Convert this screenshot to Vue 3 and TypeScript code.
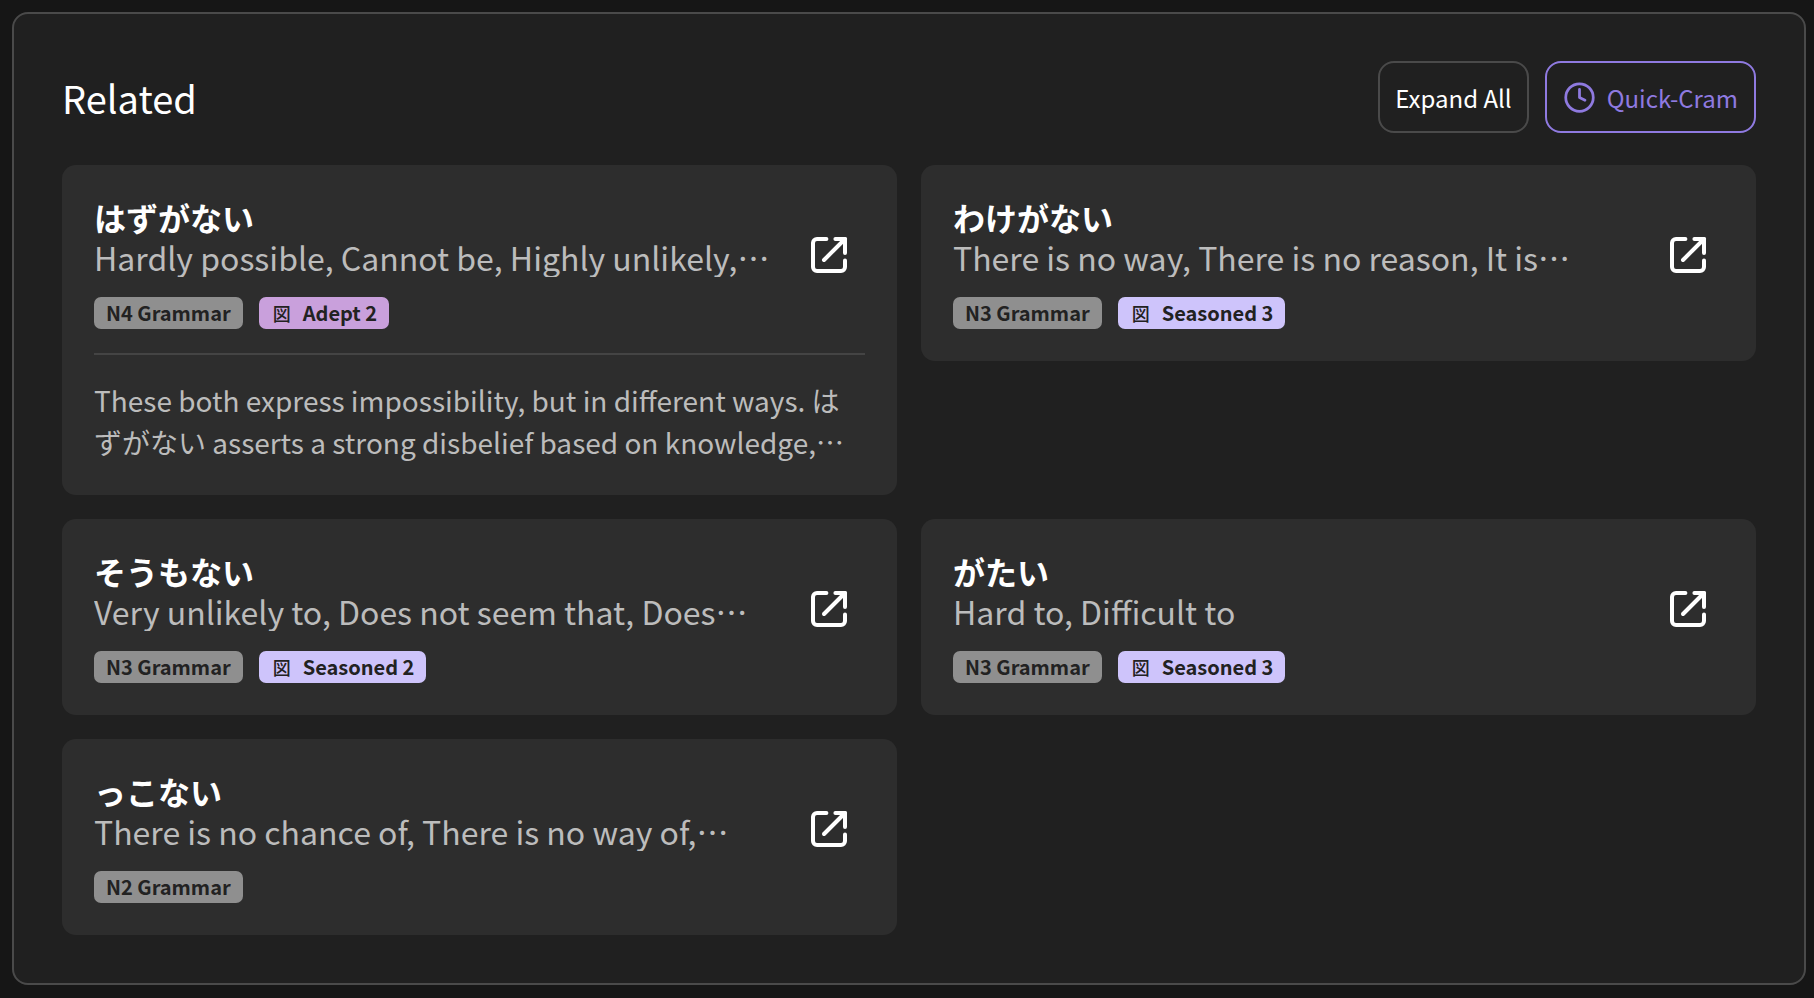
<template>
  <div class="page">
    <section class="panel">
      <header class="panel-head">
        <h2 class="panel-title">Related</h2>
        <div class="panel-actions">
          <button type="button" class="btn btn-expand">Expand All</button>
          <button type="button" class="btn btn-cram">
            <svg class="clock" viewBox="0 0 24 24" fill="none" stroke="currentColor" stroke-width="2" stroke-linecap="round" stroke-linejoin="round">
              <circle cx="12" cy="12" r="10" />
              <path d="M12 6v6l4 2" />
            </svg>
            Quick-Cram
          </button>
        </div>
      </header>
      <div class="grid">
        <article v-for="item in items" :key="item.title" class="card">
          <div class="card-top">
            <div class="card-main">
              <h3 class="card-title">{{ item.title }}</h3>
              <p class="card-meaning">{{ item.meaning }}</p>
            </div>
            <svg class="open" viewBox="0 0 24 24" fill="none" stroke="currentColor" stroke-width="2" stroke-linecap="round" stroke-linejoin="round">
              <path d="M10.7 4H6a2 2 0 0 0-2 2v12a2 2 0 0 0 2 2h12a2 2 0 0 0 2-2v-3.3" />
              <path d="M15.2 4H20v7" />
              <path d="M20 4 9.5 14.5" />
            </svg>
          </div>
          <div class="tags">
            <span class="tag tag-level">{{ item.level }}</span>
            <span v-if="item.srs" class="tag" :class="item.srsClass"><span class="tag-kanji">図</span>{{ item.srs }}</span>
          </div>
          <p v-if="item.note" class="card-note">{{ item.note }}</p>
        </article>
      </div>
    </section>
  </div>
</template>

<script setup lang="ts">
interface RelatedItem {
  title: string
  meaning: string
  level: string
  srs?: string
  srsClass?: string
  note?: string
}

const items: RelatedItem[] = [
  {
    title: 'はずがない',
    meaning: 'Hardly possible, Cannot be, Highly unlikely, Impossible that, There is no way that',
    level: 'N4 Grammar',
    srs: 'Adept 2',
    srsClass: 'tag-adept',
    note: 'These both express impossibility, but in different ways. はずがない asserts a strong disbelief based on knowledge, whereas the other expresses a lack of any reason at all for something.'
  },
  {
    title: 'わけがない',
    meaning: 'There is no way, There is no reason, It is impossible that, Cannot possibly be',
    level: 'N3 Grammar',
    srs: 'Seasoned 3',
    srsClass: 'tag-seasoned'
  },
  {
    title: 'そうもない',
    meaning: 'Very unlikely to, Does not seem that, Does not look like it will happen at all',
    level: 'N3 Grammar',
    srs: 'Seasoned 2',
    srsClass: 'tag-seasoned'
  },
  {
    title: 'がたい',
    meaning: 'Hard to, Difficult to',
    level: 'N3 Grammar',
    srs: 'Seasoned 3',
    srsClass: 'tag-seasoned'
  },
  {
    title: 'っこない',
    meaning: 'There is no chance of, There is no way of, Absolutely cannot, Could never',
    level: 'N2 Grammar'
  }
]
</script>

<style>
html,
body {
  margin: 0;
  background: #161616;
}
</style>

<style scoped>
.page {
  box-sizing: border-box;
  height: 998px;
  padding: 12px 8px 12px 12px;
  font-family: "Noto Sans CJK JP", "Noto Sans", sans-serif;
}

.panel {
  box-sizing: border-box;
  height: 973px;
  padding: 47px 48px 48px;
  background: #202020;
  border: 2px solid #4a4a4a;
  border-radius: 16px;
}

.panel-head {
  display: flex;
  align-items: center;
  justify-content: space-between;
  height: 72px;
  margin-bottom: 32px;
}

.panel-title {
  margin: 0;
  font-size: 38px;
  font-weight: 400;
  color: #fff;
}

.panel-actions {
  display: flex;
  gap: 16px;
}

.btn {
  display: flex;
  align-items: center;
  gap: 11px;
  height: 72px;
  padding: 0 16px;
  background: transparent;
  border: 2px solid #4a4a4a;
  border-radius: 16px;
  font: inherit;
  font-size: 24px;
  color: #fff;
}

.btn-expand {
  padding: 0 15px;
}

.btn-cram {
  color: #8f7ae0;
  border-color: #8f7ae0;
}

.clock {
  width: 33px;
  height: 33px;
}

.grid {
  display: grid;
  grid-template-columns: 1fr 1fr;
  align-items: start;
  gap: 24px;
}

.card {
  box-sizing: border-box;
  padding: 32px;
  background: #2d2d2d;
  border-radius: 14px;
}

.card-top {
  display: flex;
  align-items: flex-start;
  gap: 34px;
}

.card-main {
  flex: 1;
  min-width: 0;
}

.card-title {
  margin: 0;
  font-size: 32px;
  line-height: 40px;
  font-weight: 700;
  color: #fff;
}

.card-meaning {
  display: -webkit-box;
  -webkit-box-orient: vertical;
  -webkit-line-clamp: 1;
  overflow: hidden;
  margin: 0;
  font-size: 32px;
  line-height: 40px;
  color: #bcbcbc;
}

.open {
  flex: none;
  width: 48px;
  height: 48px;
  margin: 34px 12px -2px 0;
  color: #fff;
}

.tags {
  display: flex;
  gap: 16px;
  margin-top: 20px;
}

.tag {
  display: flex;
  align-items: center;
  height: 32px;
  padding: 0 12px;
  border-radius: 7px;
  font-size: 20px;
  line-height: 24px;
  font-weight: 700;
  color: #222;
}

.tag-kanji {
  margin: 0 12px 0 2px;
  font-size: 18px;
  font-weight: 500;
}

.tag-level {
  background: #8f8f8f;
}

.tag-adept {
  background: #c9a0dc;
}

.tag-seasoned {
  background: #cec4fb;
}

.card-note {
  display: -webkit-box;
  -webkit-box-orient: vertical;
  -webkit-line-clamp: 2;
  overflow: hidden;
  margin: 24px 0 0;
  padding-top: 24px;
  border-top: 2px solid #444;
  font-size: 28px;
  line-height: 42px;
  color: #bcbcbc;
}
</style>
